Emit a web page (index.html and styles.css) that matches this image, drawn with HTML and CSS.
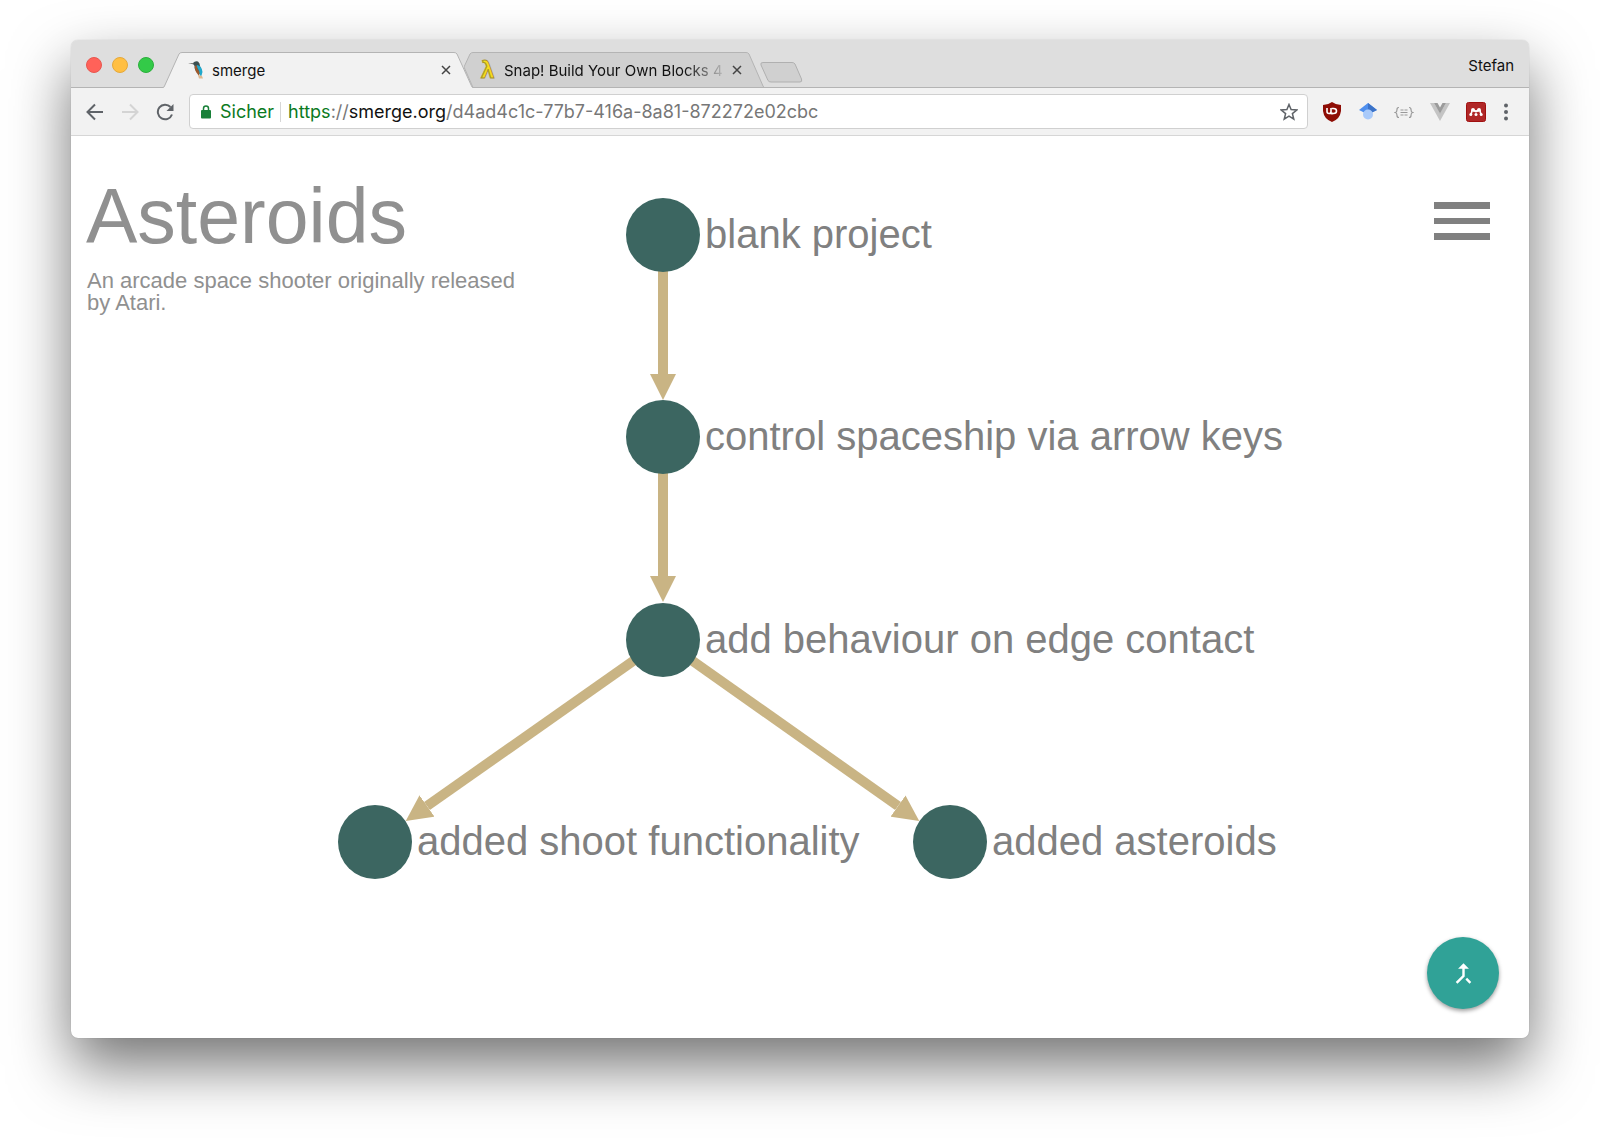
FILE: index.html
```html
<!DOCTYPE html>
<html lang="de">
<head>
<meta charset="utf-8">
<title>smerge</title>
<link rel="stylesheet" href="styles.css">
</head>
<body>
<div class="window">
  <header class="tabstrip">
    <div class="lights">
      <button class="light red" aria-label="Close window"></button>
      <button class="light yellow" aria-label="Minimise window"></button>
      <button class="light green" aria-label="Zoom window"></button>
    </div>
    <div class="tab active">
      <svg class="shape" viewBox="0 0 310 36" preserveAspectRatio="none" aria-hidden="true"><path d="M0 35.500L1 35L16 2Q17 .5 19 .5H291Q293 .5 294 2L309 35L310 36H0Z" fill="#f2f2f2"/><path d="M0 35.500Q1 35.500 1.500 34L16 2Q17 .5 19 .5H291Q293 .5 294 2L308.500 34Q309 35.500 310 35.500" fill="none" stroke="#b4b4b4"/></svg>
      <svg class="favicon" viewBox="0 0 17 20" aria-hidden="true"><path d="M0 3L6 3.500L6 4.500Z" fill="#3a3a35"/><path d="M5 3Q7 .5 10 1.500Q12 3 12 6L14 12L13 15L10 13Q6 10 6.500 6Z" fill="#3b4f50"/><path d="M9 5Q14 6 14.500 12L13 17L11 13Q11 9 8 7Z" fill="#20a8cc"/><path d="M7 5.500L9 6Q9 9 11.500 12L11 16L8 12Q6.500 9 7 5.500Z" fill="#9c592d"/><path d="M10 15L14 16L15 18.500H11Z" fill="#deb88e"/></svg>
      <span class="title">smerge</span>
      <button class="close" aria-label="Close tab"><svg viewBox="0 0 10 10"><path d="M1 1L9 9M9 1L1 9"/></svg></button>
    </div>
    <div class="tab second">
      <svg class="shape" viewBox="0 0 300 36" preserveAspectRatio="none" aria-hidden="true"><path d="M0 15L6 2Q7 .5 9 .5H282Q284 .5 285 2L299 34L300 35.500H9Z" fill="#d0d0d0" stroke="#b4b4b4"/></svg>
      <svg class="favicon" viewBox="0 0 17 20" aria-hidden="true"><text class="lambda" x="2" y="18">λ</text></svg>
      <span class="title fade">Snap! Build Your Own Blocks 4</span>
      <button class="close" aria-label="Close tab"><svg viewBox="0 0 10 10"><path d="M1 1L9 9M9 1L1 9"/></svg></button>
    </div>
    <button class="newtab" aria-label="New tab"><svg viewBox="0 0 43 21"><path d="M3 .5H32Q34 .5 35 2L41.500 17Q42.500 20 40 20H11Q9 20 8 18.500L1 3Q0 .5 3 .5Z" fill="#d0d0d0" stroke="#b0b0b0"/></svg></button>
    <button class="profile">Stefan</button>
  </header>

  <nav class="toolbar" aria-label="Browser">
    <button class="nav" aria-label="Back"><svg viewBox="0 0 18 18"><path d="M17 9H2M9 1.500L1.500 9L9 16.500" fill="none" stroke="#5f6368" stroke-width="2"/></svg></button>
    <button class="nav" aria-label="Forward" disabled><svg viewBox="0 0 18 18"><path d="M1 9H16M9 1.500L16.500 9L9 16.500" fill="none" stroke="#d4d4d4" stroke-width="2"/></svg></button>
    <button class="nav" aria-label="Reload"><svg viewBox="0 0 18 18"><path d="M14.500 4A7.300 7.300 0 1 0 16 11.500" fill="none" stroke="#5f6368" stroke-width="2"/><path d="M17.500 1V8H10.500Z" fill="#5f6368"/></svg></button>
    <div class="omnibox">
      <svg class="lock" viewBox="0 0 10 14" aria-hidden="true"><path d="M2.500 6V3.500Q2.500 1 5 1T7.500 3.500V6" fill="none" stroke="#188038" stroke-width="1.500"/><rect y="5" width="10" height="8.500" rx="1" fill="#188038"/></svg>
      <span class="secure">Sicher</span>
      <div class="url" role="textbox" contenteditable="true" spellcheck="false" aria-label="Address"><span class="scheme">https</span>://<span class="host">smerge.org</span>/d4ad4c1c-77b7-416a-8a81-872272e02cbc</div>
      <button class="star" aria-label="Bookmark"><svg viewBox="0 0 18 18"><path d="M9 1.500L11.100 6.600L16.800 7L12.400 10.600L13.800 16.200L9 13.200L4.200 16.200L5.600 10.600L1.200 7L6.900 6.600Z" fill="none" stroke="#5f6368" stroke-width="1.500"/></svg></button>
    </div>
    <div class="extensions">
      <button aria-label="uBlock Origin"><svg viewBox="0 0 20 20"><path d="M10 0Q14 3 19 3V9Q18 17 10 20Q2 17 1 9V3Q6 3 10 0Z" fill="#8e0d05"/><path d="M5 6V9.500Q5 11.500 7 11.500T9 9.500V6V11.500H11" fill="none" stroke="#fff" stroke-width="1.600"/><path d="M9.500 6.500H11.500Q14.500 6.500 14.500 9T11.500 11.500H9" fill="none" stroke="#fff" stroke-width="1.600"/></svg></button>
      <button aria-label="Scholar"><svg viewBox="0 0 20 20"><path d="M10 1L1 8L6 10.500H14L19 8Z" fill="#4f8fee"/><path d="M10 1L19 8L14 10.500L10 7Z" fill="#3c73c8"/><circle cx="10" cy="12.500" r="5" fill="#a9cafa"/></svg></button>
      <button class="json" aria-label="JSON viewer"><svg viewBox="0 0 20 20"><path d="M5 5.500Q3 5.500 3 7.500Q3 10 1.500 10.500Q3 11 3 13.500Q3 15.500 5 15.500M15 5.500Q17 5.500 17 7.500Q17 10 18.500 10.500Q17 11 17 13.500Q17 15.500 15 15.500M6.500 8H9.500M10.500 8H13.500M6.500 10.500H13.500M6.500 13H9.500M10.500 13H13.500" fill="none" stroke="#999" stroke-width="1.200"/></svg></button>
      <button aria-label="Vue devtools"><svg viewBox="0 0 20 20"><path d="M0 1H4L10 11L16 1H20L10 19Z" fill="#c4c4c4"/><path d="M4 1H7.500L10 5.500L12.500 1H16L10 11.500Z" fill="#9b9b9b"/></svg></button>
      <button aria-label="Mendeley"><svg viewBox="0 0 20 20"><rect x=".5" y=".5" width="19" height="19" rx="2" fill="#b02727" stroke="#a01010"/><path d="M4.800 12.500Q5.800 11 6 8M15.200 12.500Q14.200 11 14 8" fill="none" stroke="#fff" stroke-width="1.600"/><path d="M6.500 8L10 9.500L13.500 8" fill="none" stroke="#fff" stroke-width="2"/><circle cx="7" cy="7.800" r="1.900" fill="#fff"/><circle cx="13" cy="7.800" r="1.900" fill="#fff"/><circle cx="4.800" cy="12.500" r="1.500" fill="#fff"/><circle cx="10" cy="12.600" r="1.500" fill="#fff"/><circle cx="15.200" cy="12.500" r="1.500" fill="#fff"/></svg></button>
      <button class="more" aria-label="Menu"><svg viewBox="0 0 8 20"><g fill="#5f6368"><circle cx="4" cy="3.500" r="2"/><circle cx="4" cy="10" r="2"/><circle cx="4" cy="16.500" r="2"/></g></svg></button>
    </div>
  </nav>

  <main class="page">
    <svg class="graph" viewBox="0 0 1458 902" role="img" aria-label="Project history">
      <defs>
        <marker id="head" markerUnits="userSpaceOnUse" markerWidth="26" markerHeight="26" refX="0" refY="13" orient="auto"><path d="M0 0L26 13L0 26Z" fill="#c9b484"/></marker>
      </defs>
      <g class="edges">
        <path d="M592 99V238"/>
        <path d="M592 301V440"/>
        <path d="M592 504L356 670"/>
        <path d="M592 504L827 670"/>
      </g>
      <g class="nodes">
        <circle cx="592" cy="99" r="37"/>
        <circle cx="592" cy="301" r="37"/>
        <circle cx="592" cy="504" r="37"/>
        <circle cx="304" cy="706" r="37"/>
        <circle cx="879" cy="706" r="37"/>
      </g>
      <g class="labels">
        <text x="634" y="112">blank project</text>
        <text x="634" y="314">control spaceship via arrow keys</text>
        <text x="634" y="517">add behaviour on edge contact</text>
        <text x="346" y="719">added shoot functionality</text>
        <text x="921" y="719">added asteroids</text>
      </g>
    </svg>
    <div class="intro">
      <h1>Asteroids</h1>
      <p>An arcade space shooter originally released by Atari.</p>
    </div>
    <button class="menu" aria-label="Project menu"><svg viewBox="0 0 56 38"><path d="M0 0H56V7H0ZM0 16H56V22H0ZM0 31H56V38H0Z" fill="#808080"/></svg></button>
    <button class="merge" aria-label="Merge"><svg viewBox="0 0 24 24"><path fill="#fff" d="M17 20.410L18.410 19 15 15.590 13.590 17 17 20.410zM7.500 8H11v5.590L5.590 19 7 20.410l6-6V8h3.500L12 3.500 7.500 8z"/></svg></button>
  </main>
</div>
</body>
</html>
```
FILE: styles.css
```css
* { box-sizing: border-box; }
body {
  margin: 0;
  min-height: 100vh;
  padding: 40px 71px 102px;
  display: flex;
  background: #fff;
  font-family: "Liberation Sans", Arial, sans-serif;
}
button { border: 0; padding: 0; margin: 0; background: none; font: inherit; color: inherit; }
svg { display: block; }

.window {
  flex: 1;
  display: flex;
  flex-direction: column;
  min-width: 0;
  border-radius: 7px;
  background: #fff;
  box-shadow: 0 0 1px rgba(0, 0, 0, .3), 0 28px 60px rgba(0, 0, 0, .55);
}

/* Tab strip */
.tabstrip {
  display: flex;
  align-items: flex-end;
  height: 48px;
  padding: 0 15px;
  border-radius: 7px 7px 0 0;
  background: linear-gradient(#b4b4b4, #b4b4b4) bottom / 100% 1px no-repeat #dedede;
  font-family: Inter, "Noto Sans", sans-serif;
  font-size: 15px;
  color: #111;
}
.lights { display: flex; gap: 10px; width: 77px; padding-bottom: 15px; }
.light { width: 16px; height: 16px; border-radius: 50%; border: 1px solid; }
.red { background: #ff6259; border-color: #e8574f; }
.yellow { background: #ffbf43; border-color: #e5a93a; }
.green { background: #33ca48; border-color: #2bb03c; }
.tab {
  position: relative;
  display: flex;
  align-items: center;
  width: 310px;
  height: 36px;
  padding: 0 22px 0 25px;
}
.tab.active { z-index: 1; }
.tab.second { width: 300px; margin-left: -9px; padding: 0 22px 0 15px; }
.shape { position: absolute; inset: 0; width: 100%; height: 100%; }
.favicon, .title, .close { position: relative; }
.favicon { width: 17px; height: 20px; flex: none; overflow: visible; }
.lambda {
  font: bold 24px "Liberation Sans", sans-serif;
  fill: #f7dc1c;
  stroke: #a8922a;
  stroke-width: 1px;
}
.title { flex: 1; margin-left: 7px; white-space: nowrap; }
.second .title { margin-left: 8px; }
.fade { mask-image: linear-gradient(90deg, #000 82%, transparent 102%); }
.close { width: 10px; height: 10px; margin-left: 8px; }
.close svg { width: 10px; height: 10px; fill: none; stroke: #444; stroke-width: 1.5px; }
.newtab { width: 43px; margin: 0 0 5px -4px; }
.profile { margin: 0 0 13px auto; }

/* Toolbar */
.toolbar {
  display: flex;
  align-items: center;
  height: 48px;
  padding: 0 19px 0 15px;
  border-bottom: 1px solid #d6d6d6;
  background: #f2f2f2;
}
.nav { width: 18px; margin-right: 17px; }
.nav:nth-child(3) { margin-right: 15px; }
.omnibox {
  flex: 1;
  min-width: 0;
  display: flex;
  align-items: center;
  height: 35px;
  padding: 0 9px 0 11px;
  border: 1px solid #d0d0d0;
  border-radius: 4px;
  background: #fff;
  font-family: Inter, "Noto Sans", sans-serif;
  font-size: 18px;
  color: #777;
}
.lock { width: 10px; height: 14px; margin-right: 9px; }
.secure { padding-right: 6px; border-right: 1px solid #d6d6d6; line-height: 20px; color: #0b7a22; }
.url { flex: 1; min-width: 0; margin-left: 7px; overflow: hidden; white-space: nowrap; outline: 0; }
.scheme { color: #0b7a22; }
.host { color: #111; }
.star { width: 18px; }
.extensions { display: flex; gap: 16px; margin-left: 14px; }
.extensions button { width: 20px; }
.extensions .more { width: 8px; }

/* Project page */
.page {
  position: relative;
  flex: 1;
  display: flex;
  align-items: flex-start;
  justify-content: space-between;
  min-height: 600px;
  padding: 38px 39px 0 15px;
}
.graph { position: absolute; inset: 0; width: 100%; height: 100%; }
.edges { fill: none; stroke: #c9b484; stroke-width: 10px; }
.edges path { marker-end: url(#head); }
.nodes { fill: #3c6661; }
.labels { font-size: 40px; fill: #808080; }
.intro { position: relative; width: 450px; color: #909090; }
h1 { margin: 0 0 12px; font-size: 77px; font-weight: 400; line-height: 84px; }
p { margin: 0; padding-left: 1px; font-size: 22px; line-height: 22px; }
.menu { position: relative; width: 56px; margin-top: 28px; }
.merge {
  position: absolute;
  right: 30px;
  bottom: 29px;
  display: grid;
  place-items: center;
  width: 72px;
  height: 72px;
  border-radius: 50%;
  background: #30a297;
  box-shadow: 0 2px 4px rgba(0, 0, 0, .4);
}
.merge svg { width: 29px; height: 29px; }
```
